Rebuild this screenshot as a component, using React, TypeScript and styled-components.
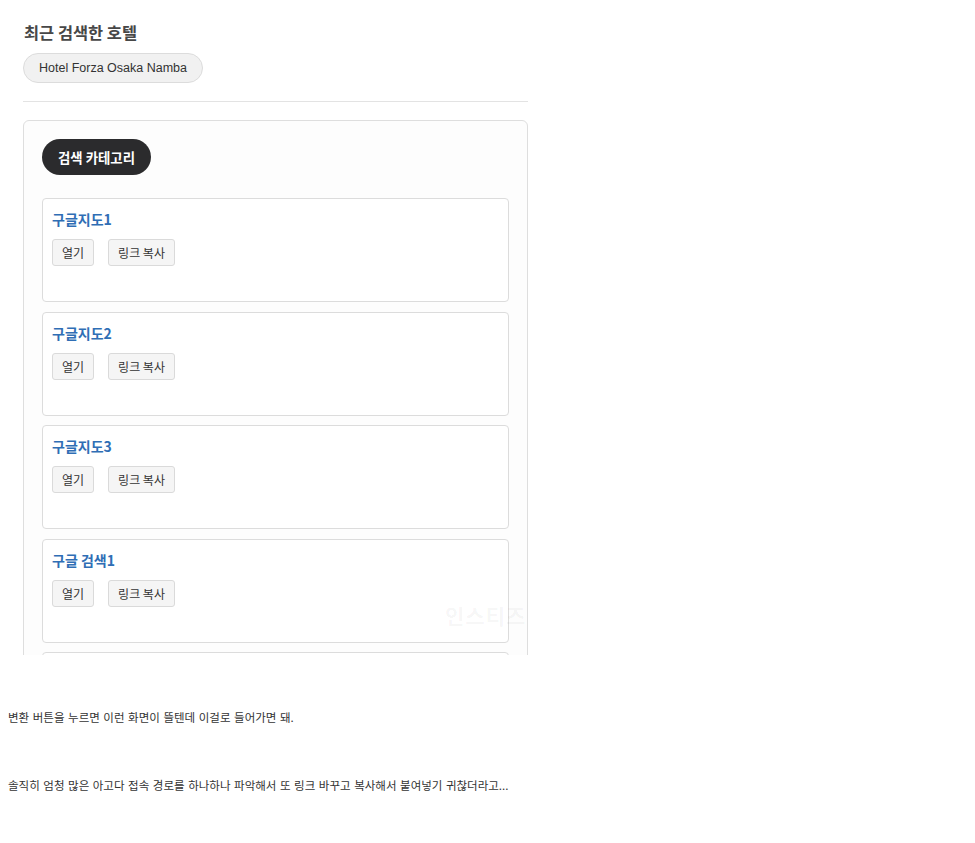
import React from "react";
import styled, { createGlobalStyle } from "styled-components";

const GlobalStyle = createGlobalStyle`
  html, body { margin: 0; padding: 0; background: #ffffff; }
  body { font-family: "Noto Sans CJK KR", "Noto Sans", sans-serif; }
  * { box-sizing: border-box; }
`;

const Page = styled.div`
  width: 975px;
  min-height: 843px;
  background: #fff;
`;

const Shot = styled.div`
  position: relative;
  width: 540px;
  height: 655px;
  overflow: hidden;
  padding: 22px 0 0 23px;
`;

const Heading = styled.h2`
  margin: 0 0 0 1px;
  font-family: "Noto Sans CJK KR", sans-serif;
  font-size: 16.4px;
  line-height: 20px;
  font-weight: 700;
  color: #474747;
`;

const HotelPill = styled.div`
  display: inline-flex;
  align-items: center;
  margin-top: 11px;
  height: 30px;
  padding: 0 15px;
  border: 1px solid #dcdcdc;
  border-radius: 15px;
  background: #f1f1f1;
  font-family: "Liberation Sans", Arial, sans-serif;
  font-size: 12.5px;
  color: #333;
`;

const Rule = styled.hr`
  width: 505px;
  margin: 18px 0 0 0;
  border: 0;
  border-top: 1px solid #e3e3e3;
`;

const Panel = styled.section`
  width: 505px;
  margin-top: 18px;
  padding: 18px;
  border: 1px solid #dedede;
  border-radius: 6px;
  background: #fdfdfd;
  display: flex;
  flex-direction: column;
  align-items: flex-start;
`;

const CategoryPill = styled.div`
  height: 36px;
  display: inline-flex;
  align-items: center;
  padding: 0 16px;
  border-radius: 18px;
  background: #2b2b2d;
  color: #fff;
  font-size: 13.4px;
  font-weight: 700;
`;

const CardList = styled.div`
  margin-top: 23px;
  width: 100%;
  display: flex;
  flex-direction: column;
  gap: 9.5px;
`;

const Card = styled.div`
  height: 104px;
  padding: 10px 9px;
  border: 1px solid #dcdcdc;
  border-radius: 4px;
  background: #fff;
`;

const CardTitle = styled.div`
  font-size: 14px;
  line-height: 20px;
  font-weight: 700;
  color: #2f6eb5;
`;

const ButtonRow = styled.div`
  margin-top: 10px;
  display: flex;
  gap: 14px;
`;

const SmallButton = styled.button`
  height: 27px;
  padding: 0 9px;
  border: 1px solid #dadada;
  border-radius: 3px;
  background: #f5f5f5;
  color: #333;
  font-family: "Noto Sans CJK KR", sans-serif;
  font-size: 12px;
  cursor: pointer;
`;

const Watermark = styled.div`
  position: absolute;
  left: 445px;
  top: 600px;
  font-size: 21px;
  font-weight: 700;
  color: rgba(0, 0, 0, 0.045);
  letter-spacing: 1px;
  pointer-events: none;
`;

const Body = styled.div`
  padding-left: 8px;
`;

const Para = styled.p<{ $top: number }>`
  margin: ${(p) => p.$top}px 0 0 0;
  font-family: "Noto Sans CJK KR", sans-serif;
  font-size: 11.5px;
  line-height: 17px;
  color: #333;
  word-spacing: 1px;
`;

const cards = ["구글지도1", "구글지도2", "구글지도3", "구글 검색1"];

export default function App() {
  return (
    <Page>
      <GlobalStyle />
      <Shot>
        <Heading>최근 검색한 호텔</Heading>
        <HotelPill>Hotel Forza Osaka Namba</HotelPill>
        <Rule />
        <Panel>
          <CategoryPill>검색 카테고리</CategoryPill>
          <CardList>
            {cards.map((c) => (
              <Card key={c}>
                <CardTitle>{c}</CardTitle>
                <ButtonRow>
                  <SmallButton>열기</SmallButton>
                  <SmallButton>링크 복사</SmallButton>
                </ButtonRow>
              </Card>
            ))}
            <Card aria-hidden="true" />
          </CardList>
        </Panel>
        <Watermark>인스티즈</Watermark>
      </Shot>
      <Body>
        <Para $top={54}>변환 버튼을 누르면 이런 화면이 뜰텐데 이걸로 들어가면 돼.</Para>
        <Para $top={51}>
          솔직히 엄청 많은 아고다 접속 경로를 하나하나 파악해서 또 링크 바꾸고 복사해서 붙여넣기 귀찮더라고...
        </Para>
      </Body>
    </Page>
  );
}
